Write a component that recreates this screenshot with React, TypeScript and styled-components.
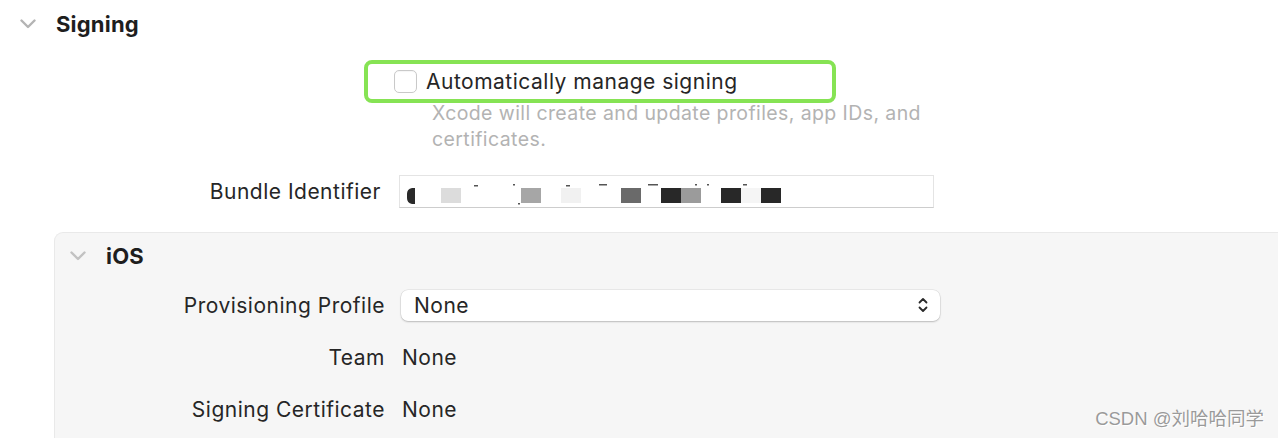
import React from 'react';
import styled, { createGlobalStyle } from 'styled-components';

const GlobalStyle = createGlobalStyle`
    html, body {
        margin: 0;
        padding: 0;
        background: #ffffff;
    }
    body {
        width: 1278px;
        height: 438px;
        overflow: hidden;
        font-family: Inter, "Noto Sans", "Liberation Sans", sans-serif;
        color: #262626;
    }
`;

const Page = styled.div`
    position: relative;
    width: 1278px;
    height: 438px;
    overflow: hidden;
`;

const SectionHeader = styled.div<{ inset: number; height: number }>`
    display: flex;
    align-items: center;
    height: ${({ height }) => height}px;
    padding-left: ${({ inset }) => inset}px;
`;

const Disclosure = styled.svg`
    flex: none;
    width: 16px;
    height: 10px;
`;

const SectionTitle = styled.span<{ gap: number }>`
    margin-left: ${({ gap }) => gap}px;
    font-size: 22px;
    letter-spacing: 0.2px;
    font-weight: 700;
    color: #1e1e1e;
`;

const Highlight = styled.div`
    display: flex;
    align-items: center;
    box-sizing: border-box;
    margin: 12px 0 0 364px;
    width: 472px;
    height: 43px;
    padding-left: 26px;
    border: 4px solid #86e354;
    border-radius: 8px;
`;

const Checkbox = styled.span`
    flex: none;
    box-sizing: border-box;
    width: 23px;
    height: 23px;
    border: 1px solid #c9c9c9;
    border-radius: 5px;
    background: #fff;
    box-shadow: inset 0 1px 1px rgba(0, 0, 0, 0.04);
`;

const Text = styled.span`
    font-size: 21px;
    letter-spacing: 0.5px;
`;

const CheckLabel = styled(Text)`
    margin-left: 9px;
`;

const Hint = styled.p`
    margin: -3px 0 0 432px;
    width: 520px;
    font-size: 19.5px;
    letter-spacing: 0.4px;
    line-height: 26px;
    color: #b3b3b3;
`;

const FormRow = styled.div<{ height: number }>`
    display: flex;
    align-items: center;
    height: ${({ height }) => height}px;
`;

const Label = styled(Text)<{ width: number }>`
    flex: none;
    width: ${({ width }) => width}px;
    text-align: right;
`;

const Value = styled(Text)<{ gap: number }>`
    margin-left: ${({ gap }) => gap}px;
`;

const BundleRow = styled(FormRow)`
    margin-top: 23px;
`;

const TextField = styled.div`
    display: flex;
    align-items: center;
    box-sizing: border-box;
    margin-left: 18px;
    width: 535px;
    height: 33px;
    background: #fff;
    border: 1px solid #e4e4e4;
    border-bottom-color: #cdcdcd;
`;

const Panel = styled.div`
    margin: 24px 0 0 54px;
    height: 300px;
    background: #f6f6f6;
    border: 1px solid #e9e9e9;
    border-right: none;
    border-top-left-radius: 9px;
`;

const PopUp = styled.div`
    display: flex;
    align-items: center;
    justify-content: space-between;
    box-sizing: border-box;
    margin-left: 16px;
    width: 539px;
    height: 31px;
    padding: 0 12px 0 13px;
    background: #fff;
    border-radius: 7px;
    box-shadow: 0 0 0 0.5px rgba(0, 0, 0, 0.1), 0 1px 2px rgba(0, 0, 0, 0.2);
    font-size: 21px;
    letter-spacing: 0.5px;
`;

const Watermark = styled.span`
    position: absolute;
    right: 14px;
    bottom: 8px;
    font-family: "Liberation Sans", "Noto Sans CJK SC", sans-serif;
    font-size: 18.5px;
    color: #9a9a9a;
    text-shadow: 0 0 1px #fff, 1px 1px 0 #fff;
`;

const Chevron = ({ color }: { color: string }) => (
    <Disclosure viewBox="0 0 16 10">
        <polyline points="1.5,1.5 8,8 14.5,1.5" fill="none" stroke={color} strokeWidth="2.4" strokeLinecap="round" strokeLinejoin="round" />
    </Disclosure>
);

const UpDown = () => (
    <svg width="10" height="16" viewBox="0 0 10 16">
        <polyline points="1.5,5.5 5,2 8.5,5.5" fill="none" stroke="#2a2a2a" strokeWidth="1.8" strokeLinecap="round" strokeLinejoin="round" />
        <polyline points="1.5,10.5 5,14 8.5,10.5" fill="none" stroke="#2a2a2a" strokeWidth="1.8" strokeLinecap="round" strokeLinejoin="round" />
    </svg>
);

// redacted identifier: mosaic blocks, x relative to the field
const blocks: [number, number, string][] = [
    [41, 20, '#dcdcdc'],
    [121, 20, '#a6a6a6'],
    [161, 20, '#f1f1f1'],
    [221, 20, '#6a6a6a'],
    [261, 20, '#282828'],
    [281, 20, '#9b9b9b'],
    [321, 20, '#282828'],
    [341, 20, '#f5f5f5'],
    [361, 20, '#282828'],
];

const specks: [number, number, number][] = [
    [74, 9, 4],
    [113, 8, 2],
    [118, 27, 2],
    [166, 9, 4],
    [199, 8, 8],
    [248, 8, 10],
    [295, 8, 2],
    [307, 8, 2],
    [343, 8, 4],
];

const Redacted = () => (
    <svg width="400" height="31" viewBox="0 0 400 31">
        <path d="M12 12 a6 6 0 0 0 -5 6 v4 a6 6 0 0 0 5 6 h3 v-16 z" fill="#2a2a2a" />
        {blocks.map(([x, w, c]) => (
            <rect key={x} x={x} y={12} width={w} height={15} fill={c} />
        ))}
        {specks.map(([x, y, w]) => (
            <rect key={`${x}-${y}`} x={x} y={y} width={w} height={1.5} fill="#555" />
        ))}
    </svg>
);

export default function App() {
    return (
        <Page>
            <GlobalStyle />
            <SectionHeader inset={20} height={48}>
                <Chevron color="#b4b4b4" />
                <SectionTitle gap={20}>Signing</SectionTitle>
            </SectionHeader>

            <Highlight>
                <Checkbox />
                <CheckLabel>Automatically manage signing</CheckLabel>
            </Highlight>
            <Hint>
                Xcode will create and update profiles, app IDs, and
                <br />
                certificates.
            </Hint>

            <BundleRow height={33}>
                <Label width={381}>Bundle Identifier</Label>
                <TextField>
                    <Redacted />
                </TextField>
            </BundleRow>

            <Panel>
                <SectionHeader inset={15} height={46}>
                    <Chevron color="#c2c2c2" />
                    <SectionTitle gap={20}>iOS</SectionTitle>
                </SectionHeader>
                <FormRow height={52}>
                    <Label width={330}>Provisioning Profile</Label>
                    <PopUp>
                        None
                        <UpDown />
                    </PopUp>
                </FormRow>
                <FormRow height={52}>
                    <Label width={330}>Team</Label>
                    <Value gap={17}>None</Value>
                </FormRow>
                <FormRow height={52}>
                    <Label width={330}>Signing Certificate</Label>
                    <Value gap={17}>None</Value>
                </FormRow>
            </Panel>

            <Watermark>CSDN @刘哈哈同学</Watermark>
        </Page>
    );
}
